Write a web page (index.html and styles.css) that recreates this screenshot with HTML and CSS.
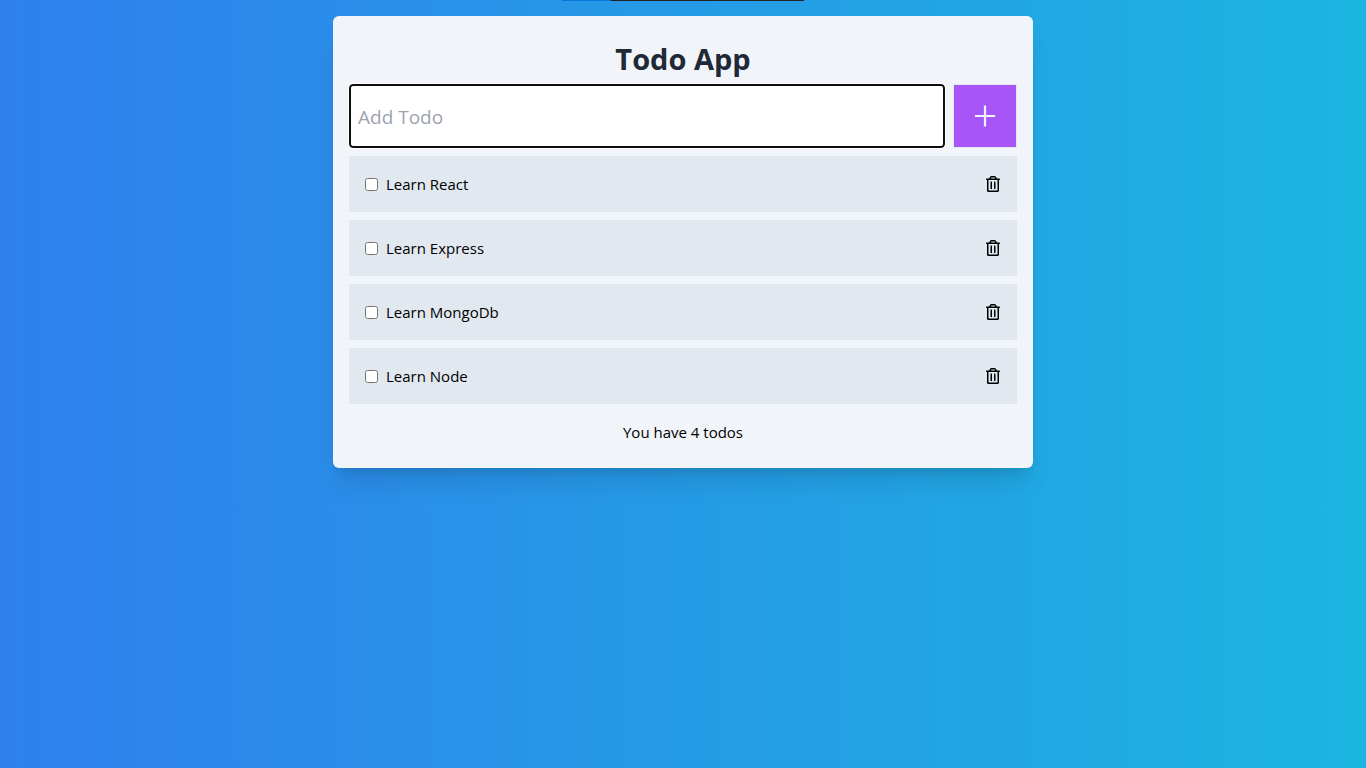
FILE: index.html
```html
<!DOCTYPE html>
<html lang="en">
<head>
<meta charset="utf-8">
<meta name="viewport" content="width=device-width, initial-scale=1">
<title>Todo App</title>
<link rel="stylesheet" href="styles.css">
</head>
<body>
<svg class="sprite" aria-hidden="true">
  <symbol id="plus" viewBox="0 0 1024 1024"><path d="M482 152h60q8 0 8 8v704q0 8-8 8h-60q-8 0-8-8V160q0-8 8-8z"/><path d="M176 474h672q8 0 8 8v60q0 8-8 8H176q-8 0-8-8v-60q0-8 8-8z"/></symbol>
  <symbol id="trash" viewBox="0 0 448 512"><path d="M268 416h24a12 12 0 0 0 12-12V188a12 12 0 0 0-12-12h-24a12 12 0 0 0-12 12v216a12 12 0 0 0 12 12zM432 80h-82.41l-34-56.7A48 48 0 0 0 274.41 0H173.59a48 48 0 0 0-41.16 23.3L98.41 80H16A16 16 0 0 0 0 96v16a16 16 0 0 0 16 16h16v336a48 48 0 0 0 48 48h288a48 48 0 0 0 48-48V128h16a16 16 0 0 0 16-16V96a16 16 0 0 0-16-16zM171.84 50.91A6 6 0 0 1 177 48h94a6 6 0 0 1 5.15 2.91L293.61 80H154.39zM368 464H80V128h288zm-212-48h24a12 12 0 0 0 12-12V188a12 12 0 0 0-12-12h-24a12 12 0 0 0-12 12v216a12 12 0 0 0 12 12z"/></symbol>
</svg>
<div class="top-strip"></div>
<main class="card">
  <h1 class="title">Todo App</h1>
  <form class="form">
    <input class="field" type="text" placeholder="Add Todo" aria-label="Add Todo">
    <button class="add" type="button" aria-label="Add"><svg class="add-icon"><use href="#plus"/></svg></button>
  </form>
  <ul class="list">
    <li class="item"><label class="label"><input class="check" type="checkbox">Learn React</label><button class="delete" type="button" aria-label="Delete Learn React"><svg class="delete-icon"><use href="#trash"/></svg></button></li>
    <li class="item"><label class="label"><input class="check" type="checkbox">Learn Express</label><button class="delete" type="button" aria-label="Delete Learn Express"><svg class="delete-icon"><use href="#trash"/></svg></button></li>
    <li class="item"><label class="label"><input class="check" type="checkbox">Learn MongoDb</label><button class="delete" type="button" aria-label="Delete Learn MongoDb"><svg class="delete-icon"><use href="#trash"/></svg></button></li>
    <li class="item"><label class="label"><input class="check" type="checkbox">Learn Node</label><button class="delete" type="button" aria-label="Delete Learn Node"><svg class="delete-icon"><use href="#trash"/></svg></button></li>
  </ul>
  <p class="count">You have 4 todos</p>
</main>
</body>
</html>
```

FILE: styles.css
```css
* {
  box-sizing: border-box;
}

body {
  margin: 0;
  min-height: 100vh;
  padding: 16px;
  background: linear-gradient(to right, #2f80ed, #1cb5e0);
  color: #000;
  font: 15px/24px "Segoe UI", "Open Sans", "Noto Sans", sans-serif;
}

.sprite {
  position: absolute;
  width: 0;
  height: 0;
}

.top-strip {
  position: absolute;
  top: 0;
  left: 50%;
  width: 242px;
  height: 1px;
  margin-left: -121px;
  background: linear-gradient(to right, #0078d7 49px, #222 49px);
}

.card {
  max-width: 700px;
  margin: 0 auto;
  padding: 16px;
  border-radius: 6px;
  background: #f1f5f9;
  box-shadow: 0 20px 25px -5px rgba(0, 0, 0, 0.1), 0 8px 10px -6px rgba(0, 0, 0, 0.1);
}

.title {
  margin: 0;
  padding: 8px 8px 6px;
  color: #1f2937;
  font-size: 29px;
  line-height: 38px;
  font-weight: 700;
  text-align: center;
}

.form {
  display: flex;
  gap: 8px;
}

.field {
  flex: 1;
  min-width: 0;
  height: 64px;
  padding: 2px 7px 0;
  border: 2px solid #101010;
  border-radius: 4px;
  outline: 1px solid #fff;
  background: #fff;
  color: #000;
  font: inherit;
  font-size: 19px;
}

.field::placeholder {
  color: #9ca3af;
}

.add {
  display: flex;
  align-items: center;
  justify-content: center;
  width: 64px;
  height: 64px;
  padding: 0;
  border: 1px solid #e2e8f0;
  background: #a855f7;
  color: #f1f5f9;
}

.add-icon {
  width: 30px;
  height: 30px;
  fill: currentColor;
}

.list {
  display: grid;
  gap: 8px;
  margin: 8px 0 0;
  padding: 0;
  list-style: none;
}

.item {
  display: flex;
  align-items: center;
  justify-content: space-between;
  padding: 16px;
  background: #e2e8f0;
}

.label {
  display: flex;
  align-items: center;
  gap: 8px;
}

.check {
  width: 13px;
  height: 13px;
  margin: 0;
}

.delete {
  display: flex;
  padding: 0;
  border: 0;
  background: none;
  color: #000;
}

.delete-icon {
  width: 16px;
  height: 16px;
  fill: currentColor;
}

.count {
  margin: 8px 0 0;
  padding: 8px;
  text-align: center;
}
```
